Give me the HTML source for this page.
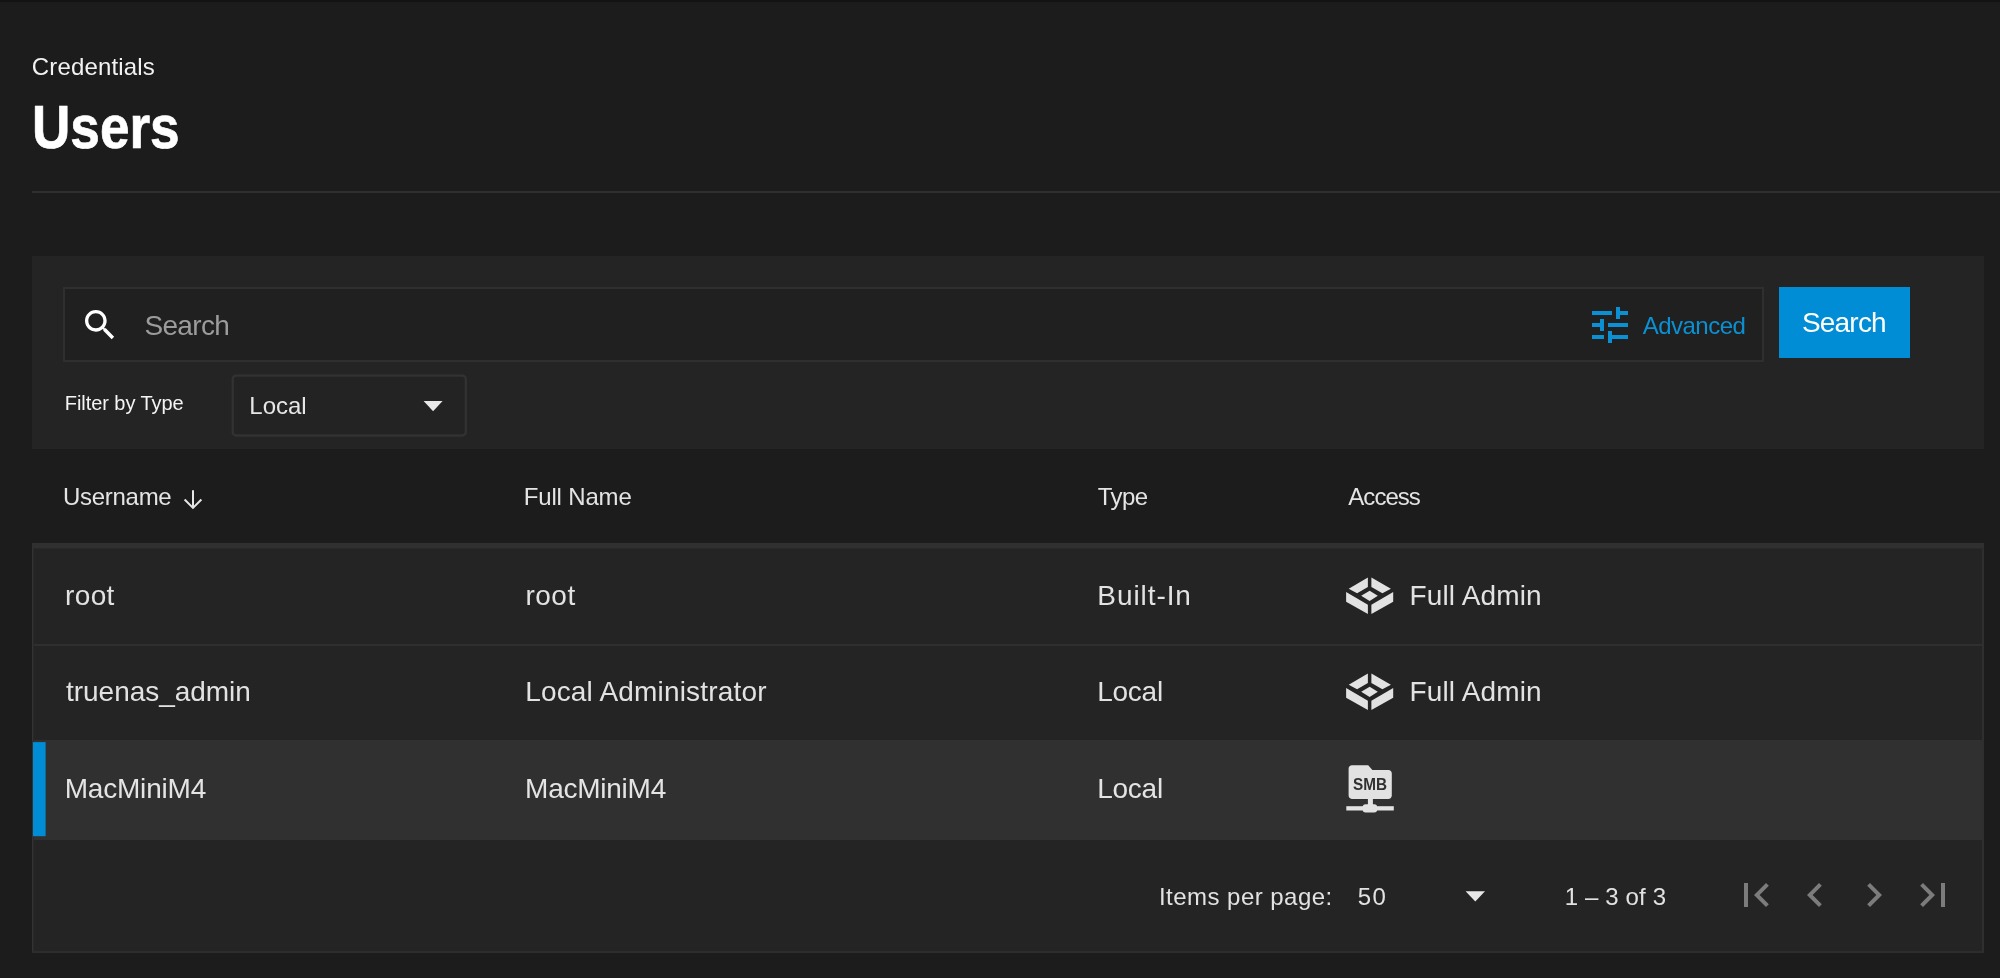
<!DOCTYPE html>
<html lang="en">
<head>
<meta charset="utf-8">
<title>Users</title>
<style>
html,body{margin:0;padding:0;background:#1c1c1c;overflow:hidden;}
body{width:2000px;height:978px;position:relative;overflow:hidden;font-family:"Liberation Sans",sans-serif;}
.abs,.t,svg{position:absolute;}
.t{white-space:nowrap;line-height:1;margin:0;padding:0;font-weight:400;}
.topbar{left:0;top:0;width:2000px;height:2px;background:#131313;}
.divider{left:32px;top:191px;width:1968px;height:2px;background:#2f2f2f;}
.filtercard{left:32px;top:256px;width:1952px;height:193px;background:#242424;}
.searchbox{left:63px;top:287px;width:1697px;height:71px;border:2px solid #2f2f2f;background:#202020;}
.searchbtn{left:1779px;top:287px;width:131px;height:71px;background:#008dd5;}
.tbody{left:32px;top:543px;width:1952px;height:410px;background:#242424;}
.tband{left:32px;top:543px;width:1952px;height:5px;background:#303030;border-bottom:1px solid #292929;}
.bl{left:32px;top:548px;width:1px;height:405px;background:#333333;border-right:1px solid #292929;}
.br{left:1982px;top:549px;width:2px;height:404px;background:#2f2f2f;}
.bb{left:32px;top:951px;width:1952px;height:2px;background:#2d2d2d;}
.sep{left:34px;top:644px;width:1948px;height:2px;background:#2f2f2f;}
.rowsel{left:34px;top:740px;width:1948px;height:100px;background:#303030;}
</style>
</head>
<body>
<main id="app" style="will-change:transform">
<div class="abs topbar"></div>

<header>
<nav aria-label="breadcrumb"><span class="t" id="t0" role="link" style="left:31.80px;top:54.68px;font-size:24px;color:#f2f2f2;letter-spacing:0.166px;">Credentials</span></nav>
<h1 style="margin:0"><span class="t" id="t1" style="left:31.81px;top:97.17px;font-size:60.5px;color:#ffffff;transform:scaleX(0.8778);transform-origin:0 0;font-weight:700;-webkit-text-stroke:0.7px #ffffff;">Users</span></h1>
<div class="abs divider"></div>
</header>

<section class="filters" role="search">
<div class="abs filtercard"></div>
<div class="abs searchbox"></div>
<svg style="left:80px;top:305px" width="40" height="40" viewBox="0 0 24 24"><path fill="#ffffff" d="M15.5 14h-.79l-.28-.27C15.41 12.59 16 11.11 16 9.5 16 5.91 13.09 3 9.5 3S3 5.91 3 9.5 5.91 16 9.5 16c1.61 0 3.09-.59 4.23-1.57l.27.28v.79l5 4.99L20.49 19l-4.99-5zm-6 0C7.01 14 5 11.99 5 9.5S7.01 5 9.5 5 14 7.01 14 9.5 11.99 14 9.5 14z"/></svg>
<span class="t" id="t2" role="searchbox" aria-placeholder="Search" style="left:144.44px;top:312.29px;font-size:28px;color:#9c9c9c;letter-spacing:-0.676px;">Search</span>
<svg style="left:1586px;top:301px" width="48" height="48" viewBox="0 0 24 24"><path fill="#0b90d3" d="M3 17v2h6v-2H3zM3 5v2h10V5H3zm10 16v-2h8v-2h-8v-2h-2v6h2zM7 9v2H3v2h4v2h2V9H7zm14 4v-2H11v2h10zm-6-4h2V7h4V5h-4V3h-2v6z"/></svg>
<span class="t" id="t3" role="button" style="left:1642.64px;top:314.08px;font-size:24px;color:#0b90d3;letter-spacing:-0.497px;">Advanced</span>
<div class="abs searchbtn"></div>
<span class="t" id="t4" role="button" style="left:1801.94px;top:309.09px;font-size:28px;color:#ffffff;letter-spacing:-0.796px;">Search</span>
<span class="t" id="t5" role="label" style="left:64.75px;top:393.37px;font-size:20px;color:#f4f4f4;letter-spacing:-0.058px;">Filter by Type</span>
<svg style="left:226px;top:370px" width="248" height="72" viewBox="0 0 248 72"><rect x="6.7" y="5.6" width="233.1" height="59.9" rx="3.5" fill="#232323" stroke="#323232" stroke-width="2.3"/></svg>
<span class="t" id="t6" role="combobox" style="left:249.32px;top:393.68px;font-size:24px;color:#e6e6e6;letter-spacing:-0.015px;">Local</span>
<svg style="left:420px;top:396px" width="26" height="20" viewBox="0 0 26 20"><polygon fill="#e8e8e8" points="3.6,4.9 22.6,4.9 13.1,15.2"/></svg>
</section>

<section role="table" aria-label="Users">
<div role="rowgroup"><div role="row">
<span class="t" id="t7" role="columnheader" aria-sort="descending" style="left:63.04px;top:484.68px;font-size:24px;color:#e4e4e4;letter-spacing:-0.289px;">Username</span>
<svg style="left:180px;top:486px" width="26" height="26" viewBox="0 0 26 26"><path fill="none" stroke="#e6e6e6" stroke-width="2" d="M13 4.2V21.6M4.6 13.5L13 21.9L21.4 13.5"/></svg>
<span class="t" id="t8" role="columnheader" style="left:523.72px;top:484.68px;font-size:24px;color:#e4e4e4;letter-spacing:-0.165px;">Full Name</span>
<span class="t" id="t9" role="columnheader" style="left:1097.86px;top:484.68px;font-size:24px;color:#e4e4e4;letter-spacing:-0.620px;">Type</span>
<span class="t" id="t10" role="columnheader" style="left:1348.34px;top:484.68px;font-size:24px;color:#e4e4e4;letter-spacing:-0.968px;">Access</span>
</div></div>

<div class="abs tbody"></div>
<div class="abs tband"></div>
<div class="abs bl"></div>
<div class="abs br"></div>
<div class="abs bb"></div>
<div class="abs sep"></div>
<div class="abs rowsel"></div>
<svg style="left:30px;top:738px" width="20" height="102" viewBox="0 0 20 102"><rect x="3" y="4.1" width="12.6" height="94.1" fill="#008dd5"/></svg>

<div role="rowgroup">
<div role="row">
<span class="t" id="t11" role="cell" style="left:65.08px;top:582.49px;font-size:28px;color:#e2e2e2;letter-spacing:0.333px;">root</span>
<span class="t" id="t12" role="cell" style="left:525.48px;top:582.49px;font-size:28px;color:#e2e2e2;letter-spacing:0.500px;">root</span>
<span class="t" id="t13" role="cell" style="left:1097.29px;top:582.49px;font-size:28px;color:#e2e2e2;letter-spacing:0.930px;">Built-In</span>
<svg style="left:1340px;top:570px" width="60" height="50" viewBox="0 0 60 50"><g fill="#e2e2e2"><polygon points="8.7,18.7 27.9,7.4 27.9,16.9 17.1,23.3"/><polygon points="50.9,18.7 31.4,7.4 31.4,16.9 42.4,23.3"/><polygon points="29.65,20.7 37.8,25.8 29.65,30.9 21.2,25.8"/><polygon points="6.1,22 27.9,34.8 27.9,44 6.1,31.7"/><polygon points="53.2,22 31.4,34.8 31.4,44 53.2,31.7"/></g></svg>
<span class="t" id="t14" role="cell" style="left:1409.49px;top:581.89px;font-size:28px;color:#e2e2e2;letter-spacing:0.163px;">Full Admin</span>
</div>

<div role="row">
<span class="t" id="t15" role="cell" style="left:66.08px;top:678.19px;font-size:28px;color:#e2e2e2;letter-spacing:-0.046px;">truenas_admin</span>
<span class="t" id="t16" role="cell" style="left:525.19px;top:678.19px;font-size:28px;color:#e2e2e2;letter-spacing:0.176px;">Local Administrator</span>
<span class="t" id="t17" role="cell" style="left:1097.29px;top:678.19px;font-size:28px;color:#e2e2e2;letter-spacing:-0.280px;">Local</span>
<svg style="left:1340px;top:666.4px" width="60" height="50" viewBox="0 0 60 50"><g fill="#e2e2e2"><polygon points="8.7,18.7 27.9,7.4 27.9,16.9 17.1,23.3"/><polygon points="50.9,18.7 31.4,7.4 31.4,16.9 42.4,23.3"/><polygon points="29.65,20.7 37.8,25.8 29.65,30.9 21.2,25.8"/><polygon points="6.1,22 27.9,34.8 27.9,44 6.1,31.7"/><polygon points="53.2,22 31.4,34.8 31.4,44 53.2,31.7"/></g></svg>
<span class="t" id="t18" role="cell" style="left:1409.49px;top:678.49px;font-size:28px;color:#e2e2e2;letter-spacing:0.163px;">Full Admin</span>
</div>

<div role="row" aria-selected="true">
<span class="t" id="t19" role="cell" style="left:64.69px;top:775.39px;font-size:28px;color:#e4e4e4;letter-spacing:-0.200px;">MacMiniM4</span>
<span class="t" id="t20" role="cell" style="left:525.09px;top:775.39px;font-size:28px;color:#e4e4e4;letter-spacing:-0.250px;">MacMiniM4</span>
<span class="t" id="t21" role="cell" style="left:1097.29px;top:775.39px;font-size:28px;color:#e4e4e4;letter-spacing:-0.280px;">Local</span>
<svg style="left:1340px;top:760px" width="60" height="60" viewBox="0 0 60 60"><g fill="#e2e2e2"><path d="M12 5.3h16.2l4.2 4.7h16c2 0 3.4 1.5 3.4 3.4v22.1c0 2-1.5 3.4-3.4 3.4H12c-2 0-3.4-1.5-3.4-3.4V8.7c0-2 1.5-3.4 3.4-3.4z"/><rect x="27.9" y="38" width="5" height="7"/><rect x="22.6" y="44.2" width="14.6" height="8.3" rx="3"/><rect x="6.3" y="46.2" width="47.5" height="4.3"/></g><text x="30" y="29.6" text-anchor="middle" font-family="Liberation Sans, sans-serif" font-weight="700" font-size="17" fill="#303030" textLength="34" lengthAdjust="spacingAndGlyphs">SMB</text></svg>
</div>
</div>
</section>

<footer role="navigation" aria-label="pagination">
<span class="t" id="t22" style="left:1158.98px;top:884.68px;font-size:24px;color:#e2e2e2;letter-spacing:0.460px;">Items per page:</span>
<span class="t" id="t23" role="combobox" style="left:1357.64px;top:884.68px;font-size:24px;color:#e2e2e2;letter-spacing:1.420px;">50</span>
<svg style="left:1462px;top:886px" width="26" height="20" viewBox="0 0 26 20"><polygon fill="#e8e8e8" points="3.6,5.3 23,5.3 13.3,15.4"/></svg>
<span class="t" id="t24" style="left:1564.80px;top:885.28px;font-size:24px;color:#e2e2e2;letter-spacing:0.127px;">1 – 3 of 3</span>
<svg style="left:1732px;top:871px" width="48" height="48" viewBox="0 0 24 24"><path fill="#7c7c7c" d="M18.41 16.59L13.82 12l4.59-4.59L17 6l-6 6 6 6zM6 6h2v12H6z"/></svg>
<svg style="left:1791px;top:871px" width="48" height="48" viewBox="0 0 24 24"><path fill="#7c7c7c" d="M15.41 7.41L14 6l-6 6 6 6 1.41-1.41L10.83 12z"/></svg>
<svg style="left:1850px;top:871px" width="48" height="48" viewBox="0 0 24 24"><path fill="#7c7c7c" d="M10 6L8.59 7.41 13.17 12l-4.58 4.59L10 18l6-6z"/></svg>
<svg style="left:1909px;top:871px" width="48" height="48" viewBox="0 0 24 24"><path fill="#7c7c7c" d="M5.59 7.41L10.18 12l-4.59 4.59L7 18l6-6-6-6zM16 6h2v12h-2z"/></svg>
</footer>
</main>
</body>
</html>
